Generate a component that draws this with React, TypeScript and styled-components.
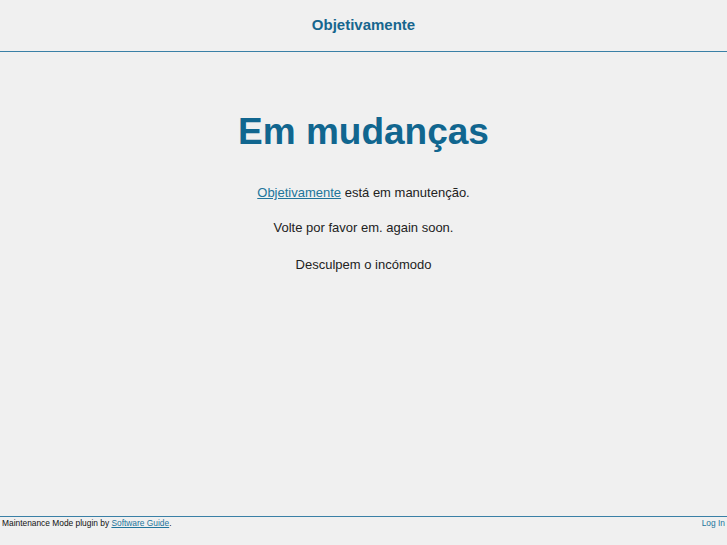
import React from "react";
import styled, { createGlobalStyle } from "styled-components";

const GlobalStyle = createGlobalStyle`
  html, body {
    margin: 0;
    padding: 0;
    background: #f0f0f0;
  }
  body {
    font-family: "Liberation Sans", Arial, sans-serif;
    color: #222222;
  }
`;

const Page = styled.div`
  display: flex;
  flex-direction: column;
  min-height: 100vh;
  box-sizing: border-box;
`;

const Header = styled.header`
  height: 51px;
  display: flex;
  align-items: center;
  justify-content: center;
  border-bottom: 1px solid #3a80a6;
  box-sizing: content-box;
`;

const SiteTitle = styled.div`
  font-size: 15px;
  font-weight: bold;
  color: #17668e;
  margin-top: -3px;
`;

const Main = styled.main`
  display: flex;
  flex-direction: column;
  align-items: center;
  padding-top: 58px;
`;

const Title = styled.h1`
  margin: 0 0 31px;
  font-size: 37px;
  line-height: 44px;
  font-weight: bold;
  color: #11668f;
`;

const Message = styled.p<{ $gap: number }>`
  margin: 0 0 ${(p) => p.$gap}px;
  font-size: 13px;
  line-height: 16px;
  color: #222222;
`;

const Link = styled.a`
  color: #21759b;
  text-decoration: underline;
`;

const Footer = styled.footer`
  margin-top: auto;
  height: 27px;
  border-top: 1px solid #3a80a6;
  display: flex;
  justify-content: space-between;
  align-items: flex-start;
  padding: 1px 2px 0 2px;
  font-size: 8.4px;
  line-height: 10px;
  color: #111111;
`;

const FooterLink = styled.a<{ $plain?: boolean }>`
  color: #21759b;
  text-decoration: ${(p) => (p.$plain ? "none" : "underline")};
`;

export default function App() {
  return (
    <>
      <GlobalStyle />
      <Page>
        <Header>
          <SiteTitle>Objetivamente</SiteTitle>
        </Header>
        <Main>
          <Title>Em mudanças</Title>
          <Message $gap={19}>
            <Link href="#">Objetivamente</Link> está em manutenção.
          </Message>
          <Message $gap={21}>Volte por favor em. again soon.</Message>
          <Message $gap={0}>Desculpem o incómodo</Message>
        </Main>
        <Footer>
          <span>
            Maintenance Mode plugin by <FooterLink href="#">Software Guide</FooterLink>.
          </span>
          <FooterLink href="#" $plain>
            Log In
          </FooterLink>
        </Footer>
      </Page>
    </>
  );
}
